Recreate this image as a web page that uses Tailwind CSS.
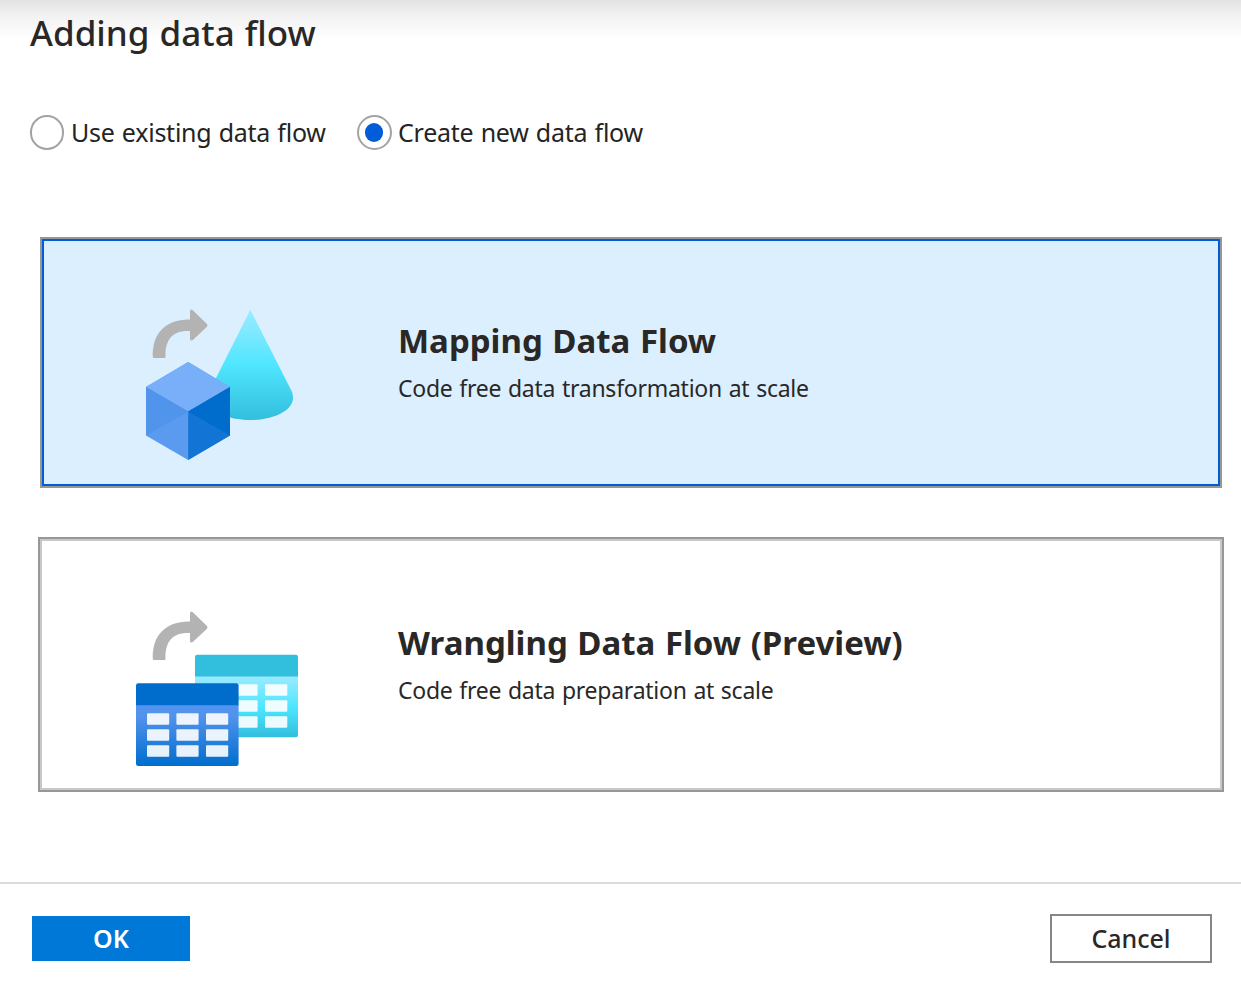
<!DOCTYPE html>
<html lang="en">
<head>
<meta charset="utf-8">
<title>Adding data flow</title>
<script src="https://cdn.jsdelivr.net/npm/@tailwindcss/browser@4"></script>
</head>
<body class="bg-white font-['Noto_Sans','Open_Sans',sans-serif] text-[#292827]">
<div class="flex h-[981px] w-[1241px] flex-col overflow-hidden bg-[linear-gradient(to_bottom,#e2e2e2_0px,#f2f2f2_16px,#ffffff_40px)] bg-no-repeat">
  <header class="h-[56px] pt-[9px] pl-[30px]">
    <h1 class="whitespace-nowrap text-[35px] leading-[48px] font-medium [word-spacing:1px]">Adding data flow</h1>
  </header>
  <div class="mt-[58px] flex h-9 items-center pl-[30px] text-[25px] leading-9 tracking-[-0.25px] text-[#242424] [word-spacing:1px]">
    <label class="flex w-[327px] items-center gap-[7px] whitespace-nowrap">
      <span class="h-[35px] w-[34px] shrink-0 rounded-full border-2 border-[#a3a3a3] bg-white"></span>
      <span>Use existing data flow</span>
    </label>
    <label class="flex items-center gap-[6px] whitespace-nowrap">
      <span class="flex size-[35px] shrink-0 items-center justify-center rounded-full border-2 border-[#a3a3a3] bg-white"><span class="mr-px h-[19px] w-[18px] rounded-full bg-[#015cda]"></span></span>
      <span>Create new data flow</span>
    </label>
  </div>
  <main class="mt-[87px] flex flex-col px-[38px]">
    <section class="ml-[2px] h-[251px] w-[1182px] border-2 border-[#979797]">
      <div class="flex h-full border-2 border-[#015cda] bg-[#dcefff]">
        <svg class="mt-[59px] ml-[86px] h-[180px] w-[180px] shrink-0" viewBox="130 300 180 180">
          <defs>
            <linearGradient id="cone" x1="0" y1="0" x2="0" y2="1"><stop offset="0" stop-color="#9cebff"/><stop offset=".5" stop-color="#50e6ff"/><stop offset="1" stop-color="#32bedd"/></linearGradient>
          </defs>
          <path d="M152.800 357C152 333 166 319 190 319.500V311.200Q190.500 308.500 192.800 310.300L207 324Q208 325.500 207 326.800L192.800 340Q190.500 341.500 190 339V331C174 330 165 338 165.500 356.500Q165.500 358 164.500 358H154.500Q152.800 358 152.800 357Z" fill="#b3b3b3"/>
          <path d="M250.300 309.800L291.600 391C292.500 393 293 395 293 398C293 410.500 273.500 420 250.300 420C227 420 208 411 208 398C208 395 208.500 393 209.500 391Z" fill="url(#cone)"/>
          <path d="M188.200 362L230 387V435.500L188.200 460L146 435.500V387Z" fill="#5a9aef"/>
          <path d="M188.200 362L230 387L188.200 411.500L146 387Z" fill="#78aff8"/>
          <path d="M146 387L188.200 411.500L146 435.500Z" fill="#5194ec"/>
          <path d="M230 387V435.500L188.200 460V411.500Z" fill="#1275d5"/>
          <path d="M230 387V435.500L188.200 411.500Z" fill="#006dcd"/>
        </svg>
        <div class="mt-[77px] ml-[88px] whitespace-nowrap">
          <h2 class="text-[33px] leading-[46px] font-bold [word-spacing:1px]">Mapping Data Flow</h2>
          <p class="mt-[8px] text-[23px] leading-8 tracking-[-0.25px] [word-spacing:1px]">Code free data transformation at scale</p>
        </div>
      </div>
    </section>
    <section class="mt-[49px] h-[255px] w-[1186px] border-2 border-[#979797]">
      <div class="flex h-full border-2 border-[#c8c8c8] bg-white">
        <svg class="mt-[59px] ml-[88px] h-[180px] w-[180px] shrink-0" viewBox="130 600 180 180">
          <defs>
            <linearGradient id="cyan" x1="0" y1="0" x2="0" y2="1"><stop offset="0" stop-color="#9cebff"/><stop offset=".5" stop-color="#50e6ff"/><stop offset="1" stop-color="#32bedd"/></linearGradient>
            <linearGradient id="blue" x1="0" y1="0" x2="0" y2="1"><stop offset="0" stop-color="#5494f0"/><stop offset=".2" stop-color="#5092eb"/><stop offset="1" stop-color="#006dcd"/></linearGradient>
          </defs>
          <path transform="translate(0 302)" d="M152.800 357C152 333 166 319 190 319.500V311.200Q190.500 308.500 192.800 310.300L207 324Q208 325.500 207 326.800L192.800 340Q190.500 341.500 190 339V331C174 330 165 338 165.500 356.500Q165.500 358 164.500 358H154.500Q152.800 358 152.800 357Z" fill="#b3b3b3"/>
          <path d="M195 676H298V735Q298 737.300 295.700 737.300H195Z" fill="url(#cyan)"/>
          <path d="M195 676.500V657Q195 654.700 197.300 654.700H295.700Q298 654.700 298 657V676.500Z" fill="#32bedd"/>
          <g fill="#fff" fill-opacity=".9">
            <rect x="235" y="684.300" width="22.600" height="11.400" rx="1"/><rect x="265" y="684.300" width="22.300" height="11.400" rx="1"/>
            <rect x="235" y="700.300" width="22.600" height="11.400" rx="1"/><rect x="265" y="700.300" width="22.300" height="11.400" rx="1"/>
            <rect x="235" y="716.300" width="22.600" height="11.400" rx="1"/><rect x="265" y="716.300" width="22.300" height="11.400" rx="1"/>
          </g>
          <path d="M136 705H238.600V763.700Q238.600 766 236.300 766H138.300Q136 766 136 763.700Z" fill="url(#blue)"/>
          <path d="M136 705.300V685.600Q136 683.300 138.300 683.300H236.300Q238.600 683.300 238.600 685.600V705.300Z" fill="#006dcd"/>
          <g fill="#fff" fill-opacity=".9">
            <rect x="147" y="713.300" width="22.200" height="11.400" rx="1"/><rect x="176.400" y="713.300" width="22.200" height="11.400" rx="1"/><rect x="206" y="713.300" width="22.200" height="11.400" rx="1"/>
            <rect x="147" y="729.300" width="22.200" height="11.400" rx="1"/><rect x="176.400" y="729.300" width="22.200" height="11.400" rx="1"/><rect x="206" y="729.300" width="22.200" height="11.400" rx="1"/>
            <rect x="147" y="745.300" width="22.200" height="11.400" rx="1"/><rect x="176.400" y="745.300" width="22.200" height="11.400" rx="1"/><rect x="206" y="745.300" width="22.200" height="11.400" rx="1"/>
          </g>
        </svg>
        <div class="mt-[79px] ml-[88px] whitespace-nowrap">
          <h2 class="text-[33px] leading-[46px] font-bold [word-spacing:1px]">Wrangling Data Flow (Preview)</h2>
          <p class="mt-[8px] text-[23px] leading-8 tracking-[-0.25px] [word-spacing:1px]">Code free data preparation at scale</p>
        </div>
      </div>
    </section>
  </main>
  <footer class="mt-[90px] flex h-[99px] items-start justify-between border-t-2 border-[#dcdcdc] pr-[29px] pl-8 text-[25px] font-medium">
    <button class="mt-8 flex h-[45px] w-[158px] items-center justify-center bg-[#0078d7] font-semibold text-white">OK</button>
    <button class="mt-[30px] flex h-[49px] w-[162px] items-center justify-center border-2 border-[#868686] bg-white">Cancel</button>
  </footer>
</div>
</body>
</html>
